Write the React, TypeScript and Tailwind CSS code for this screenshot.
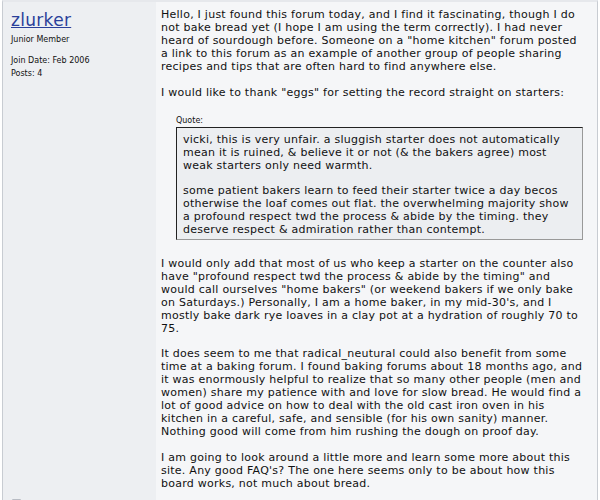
export default function App() {
  const font = { fontFamily: '"DejaVu Sans", Verdana, sans-serif' };

  return (
    <div className="h-[500px] w-[600px] overflow-hidden bg-white" style={font}>
      <div className="mx-[2px] grid grid-cols-[153px_1fr] border-x border-t-2 border-[#c8ccd2] border-t-[#e6e8ec]">
        <div className="bg-[#edeff2] px-[8px] pt-[7px]">
          <a href="#" className="text-[17px] leading-[18px] tracking-[0.3px] text-[#2a3f9a] underline">
            zlurker
          </a>
          <div className="mt-[2px] text-[8px] leading-[10px] text-[#111]">Junior Member</div>
          <div className="mt-[10px] text-[8px] leading-[12px] text-[#111]">
            <div>Join Date: Feb 2006</div>
            <div className="mt-[1px]">Posts: 4</div>
          </div>
        </div>
        <div className="bg-[#f5f6f8] pb-[6px] pl-[5px] pr-[10px] pt-[6px] text-[11px] leading-[13px] tracking-[0.25px] text-[#111]">
          <p>
            Hello, I just found this forum today, and I find it fascinating, though I do not bake bread yet (I hope I am
            using the term correctly). I had never heard of sourdough before. Someone on a "home kitchen" forum posted a
            link to this forum as an example of another group of people sharing recipes and tips that are often hard to
            find anywhere else.
          </p>
          <p className="mt-[13px]">I would like to thank "eggs" for setting the record straight on starters:</p>
          <div className="ml-[15px] mr-[4px] mt-[17px]">
            <div className="text-[8px] leading-[10px] tracking-normal">Quote:</div>
            <div className="mt-[1px] border border-[#222] border-b-[#999] border-r-[#999] bg-[#eceef1] px-[6px] pb-[3px] pt-[5px]">
              <p>
                vicki, this is very unfair. a sluggish starter does not automatically mean it is ruined, &amp; believe
                it or not (&amp; the bakers agree) most weak starters only need warmth.
              </p>
              <p className="mt-[12px]">
                some patient bakers learn to feed their starter twice a day becos otherwise the loaf comes out flat. the
                overwhelming majority show a profound respect twd the process &amp; abide by the timing. they deserve
                respect &amp; admiration rather than contempt.
              </p>
            </div>
          </div>
          <p className="mt-[17px]">
            I would only add that most of us who keep a starter on the counter also have "profound respect twd the
            process &amp; abide by the timing" and would call ourselves "home bakers" (or weekend bakers if we only
            bake on Saturdays.) Personally, I am a home baker, in my mid-30's, and I mostly bake dark rye loaves in a
            clay pot at a hydration of roughly 70 to 75.
          </p>
          <p className="mt-[12px]">
            It does seem to me that radical_neutural could also benefit from some time at a baking forum. I found baking
            forums about 18 months ago, and it was enormously helpful to realize that so many other people (men and
            women) share my patience with and love for slow bread. He would find a lot of good advice on how to deal with
            the old cast iron oven in his kitchen in a careful, safe, and sensible (for his own sanity) manner. Nothing
            good will come from him rushing the dough on proof day.
          </p>
          <p className="mt-[13px]">
            I am going to look around a little more and learn some more about this site. Any good FAQ's? The one here
            seems only to be about how this board works, not much about bread.
          </p>
        </div>
        <div className="bg-[#edeff2] px-[9px] pt-[3px]">
          <svg width="12" height="14" viewBox="0 0 12 14">
            <path d="M0.5 0.5h8l3 3v10h-11z" fill="#fdfdfd" stroke="#b8bcc4" />
            <path d="M2.5 4.5h5M2.5 7h7M2.5 9.5h7" stroke="#c8ccd2" />
          </svg>
        </div>
        <div className="flex justify-end bg-[#f5f6f8] pr-[12px] pt-[4px]">
          <div className="h-[20px] w-[50px] rounded-[3px] border border-[#d6d9de] bg-[#fafbfc]" />
        </div>
      </div>
    </div>
  );
}
